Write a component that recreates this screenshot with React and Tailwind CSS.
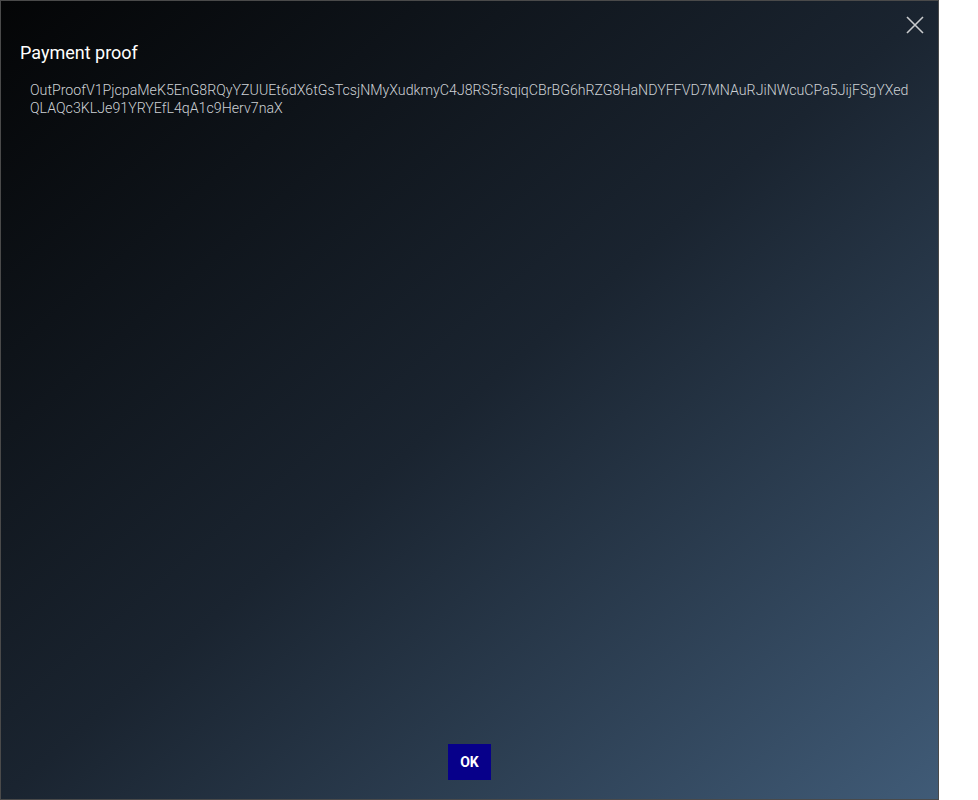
const proof =
    'OutProofV1PjcpaMeK5EnG8RQyYZUUEt6dX6tGsTcsjNMyXudkmyC4J8RS5fsqiqCBrBG6hRZG8HaNDYFFVD7MNAuRJiNWcuCPa5JijFSgYXedQLAQc3KLJe91YRYEfL4qA1c9Herv7naX';

const App = () => {
    return (
        <div className="w-[978px] h-[800px] bg-white font-['Roboto',sans-serif]">
            <div className="relative w-[939px] h-[800px] border border-[#4a4a4a] bg-[linear-gradient(to_bottom_right,#040506_0%,#1a2430_50%,#405b77_100%)] flex flex-col">
                <button className="absolute right-[14px] top-[15px] w-[18px] h-[18px] flex items-center justify-center">
                    <svg width="18" height="18" viewBox="0 0 18 18">
                        <path d="M1 1 L17 17 M17 1 L1 17" stroke="#c9cbcd" strokeWidth="1.6" fill="none" />
                    </svg>
                </button>
                <h2 className="pl-[19px] pt-[41px] text-[18px] leading-[22px] text-white">Payment proof</h2>
                <p className="pl-[29px] pr-[26px] pt-[17px] text-[14.2px] leading-[18px] text-[#cdd1d5] font-light break-all">
                    {proof}
                </p>
                <div className="mt-auto mb-[19px] flex justify-center">
                    <button className="w-[43px] h-[36px] bg-[#07008a] text-white font-bold text-[14px]">OK</button>
                </div>
            </div>
        </div>
    );
};

export default App;
